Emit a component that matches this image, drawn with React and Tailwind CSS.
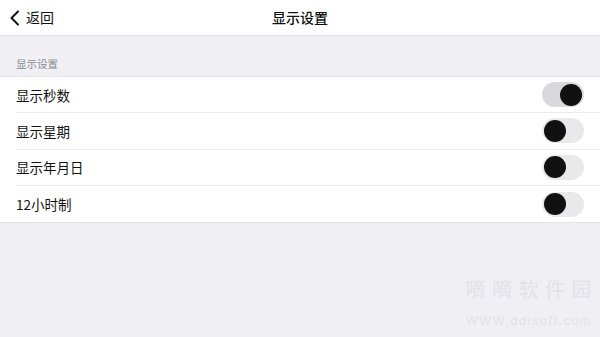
import React from "react";

function Toggle({ on }) {
  return (
    <div className={`relative w-[42px] h-[25px] rounded-full ${on ? "bg-[#d9d9dc]" : "bg-[#e9e9eb]"}`}>
      <div className={`absolute top-[1.5px] w-[22px] h-[22px] rounded-full bg-[#111] ${on ? "right-[2px]" : "left-[2px]"}`} />
    </div>
  );
}

const rows = [
  { label: "显示秒数", on: true },
  { label: "显示星期", on: false },
  { label: "显示年月日", on: false },
  { label: "12小时制", on: false },
];

export default function App() {
  return (
    <div className="w-[600px] h-[337px] bg-[#efeff4] flex flex-col overflow-hidden relative" style={{ fontFamily: '"Noto Sans CJK SC", "Noto Sans", sans-serif' }}>
      <div className="h-[36px] bg-white border-b border-[#e0e0e4] flex items-center relative shrink-0">
        <div className="flex items-center pl-[9px] gap-[6px] text-[14px] text-[#111]">
          <svg width="11" height="16" viewBox="0 0 11 16" fill="none">
            <path d="M9 1.5 L2.5 8 L9 14.5" stroke="#111" strokeWidth="2" strokeLinecap="round" strokeLinejoin="round" />
          </svg>
          <span>返回</span>
        </div>
        <div className="absolute left-0 right-0 text-center text-[14px] font-medium text-[#111] pointer-events-none">显示设置</div>
      </div>
      <div className="px-[16px] pt-[20px] pb-[4px] text-[10.5px] text-[#8a8a8e] leading-[16px]">显示设置</div>
      <div className="bg-white border-t border-b border-[#e4e4e8]">
        {rows.map((r, i) => (
          <div key={i} className="pl-[16px]">
            <div className={`h-[36.3px] flex items-center justify-between pr-[16px] ${i < rows.length - 1 ? "border-b border-[#ebebee]" : ""}`}>
              <span className="text-[13.5px] text-[#111]">{r.label}</span>
              <Toggle on={r.on} />
            </div>
          </div>
        ))}
      </div>
      <div className="absolute right-[2px] top-[274px] flex flex-col items-end text-[#e2e2e7]">
        <div className="text-[20px] tracking-[6.5px] leading-[30px]">嘀嘀软件园</div>
        <div className="text-[12.5px] tracking-[1.6px] leading-[18px] mt-[8px] pr-[6px]" style={{ fontFamily: '"Liberation Sans", sans-serif' }}>WWW.ddisoft.com</div>
      </div>
    </div>
  );
}
